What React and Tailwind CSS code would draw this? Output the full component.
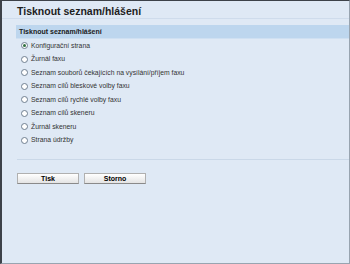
const ITEMS = [
  'Konfigurační strana',
  'Žurnál faxu',
  'Seznam souborů čekajících na vysílání/příjem faxu',
  'Seznam cílů bleskové volby faxu',
  'Seznam cílů rychlé volby faxu',
  'Seznam cílů skeneru',
  'Žurnál skeneru',
  'Strana údržby',
]

function Radio({ checked }) {
  return (
    <span className="w-[7px] h-[7px] rounded-full border border-[#6f7f90] bg-white flex items-center justify-center shrink-0">
      {checked && <span className="w-[3px] h-[3px] rounded-full bg-[#2f6f3f]" />}
    </span>
  )
}

function Button({ children }) {
  return (
    <button className="w-[62px] h-[11px] bg-gradient-to-b from-white to-[#e4e4e4] border border-[#b0b0b0] border-b-[#8a8a8a] text-[7px] font-bold leading-[9px] text-black">
      {children}
    </button>
  )
}

export default function App() {
  return (
    <div
      className="w-[350px] h-[264px] bg-[#dfe9f5] border-l-2 border-l-[#3d4249] border-t border-t-[#3d4249] border-r border-r-[#98a4b0] border-b border-b-[#98a4b0] flex flex-col overflow-hidden"
      style={{ fontFamily: '"Liberation Sans", Arial, sans-serif' }}
    >
      <div className="pl-[15px] pt-[4px] h-[18px] border-b border-[#cfdcec] text-[10.5px] font-bold leading-[13px] text-[#1d1d1d]">
        Tisknout seznam/hlášení
      </div>
      <div className="mt-[6px] ml-[14px] h-[14px] bg-[#bdd6ee] border-b border-[#cfe0f2] px-[3px] text-[7px] font-bold leading-[14px] text-[#1a1a1a]">
        Tisknout seznam/hlášení
      </div>
      <div className="flex flex-col px-[19px]">
        {ITEMS.map((item, i) => (
          <div key={item} className="h-[13.5px] flex items-center gap-[3px] text-[6.8px] text-[#333]">
            <Radio checked={i === 0} />
            <span>{item}</span>
          </div>
        ))}
      </div>
      <div className="ml-[15px] mt-[12px] border-t border-[#cad8e8]" />
      <div className="flex gap-[5px] ml-[15px] mt-[13px]">
        <Button>Tisk</Button>
        <Button>Storno</Button>
      </div>
    </div>
  )
}
